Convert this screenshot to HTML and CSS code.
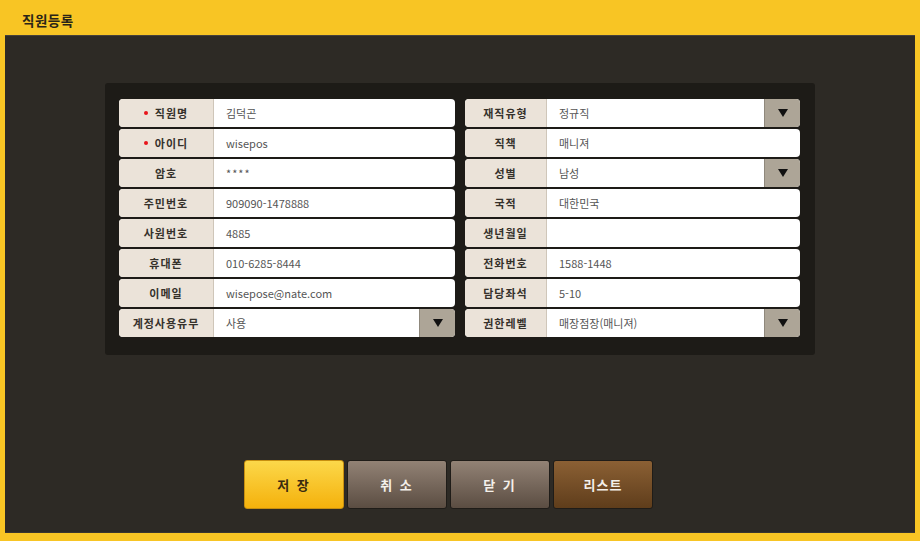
FILE: index.html
```html
<!DOCTYPE html>
<html lang="ko">
<head>
<meta charset="utf-8">
<title>직원등록</title>
<link rel="stylesheet" href="styles.css">
</head>
<body>
<div class="app">
  <header class="titlebar"><h1 class="title">직원등록</h1></header>
  <main class="main">
    <section class="panel">
      <div class="col col-left">
        <div class="row"><div class="label"><span class="req"></span>직원명</div><div class="value">김덕곤</div></div>
        <div class="row"><div class="label"><span class="req"></span>아이디</div><div class="value">wisepos</div></div>
        <div class="row"><div class="label">암호</div><div class="value pw">****</div></div>
        <div class="row"><div class="label">주민번호</div><div class="value">909090-1478888</div></div>
        <div class="row"><div class="label">사원번호</div><div class="value">4885</div></div>
        <div class="row"><div class="label">휴대폰</div><div class="value">010-6285-8444</div></div>
        <div class="row"><div class="label">이메일</div><div class="value">wisepose@nate.com</div></div>
        <div class="row"><div class="label">계정사용유무</div><div class="value">사용</div><div class="drop"><span class="tri"></span></div></div>
      </div>
      <div class="col col-right">
        <div class="row"><div class="label">재직유형</div><div class="value">정규직</div><div class="drop"><span class="tri"></span></div></div>
        <div class="row"><div class="label">직책</div><div class="value">매니져</div></div>
        <div class="row"><div class="label">성별</div><div class="value">남성</div><div class="drop"><span class="tri"></span></div></div>
        <div class="row"><div class="label">국적</div><div class="value">대한민국</div></div>
        <div class="row"><div class="label">생년월일</div><div class="value"></div></div>
        <div class="row"><div class="label">전화번호</div><div class="value">1588-1448</div></div>
        <div class="row"><div class="label">담당좌석</div><div class="value">5-10</div></div>
        <div class="row"><div class="label">권한레벨</div><div class="value">매장점장(매니져)</div><div class="drop"><span class="tri"></span></div></div>
      </div>
    </section>
    <div class="actions">
      <button class="btn btn-save">저 장</button>
      <button class="btn btn-gray">취 소</button>
      <button class="btn btn-gray">닫 기</button>
      <button class="btn btn-brown">리스트</button>
    </div>
  </main>
</div>
</body>
</html>
```
FILE: styles.css
```css
* { box-sizing: border-box; }
html, body { margin: 0; padding: 0; }
body {
  background: #f8c524;
  font-family: "Noto Sans CJK KR", "Noto Sans", sans-serif;
  width: 920px;
  height: 541px;
  overflow: hidden;
}
.app {
  height: 541px;
  padding: 0 5px 8px;
  display: flex;
  flex-direction: column;
}
.titlebar {
  height: 35px;
  display: flex;
  align-items: center;
  padding-left: 17px;
}
.title {
  margin: 0;
  font-size: 13.5px;
  font-weight: 700;
  color: #2a2418;
  letter-spacing: 0.5px;
  position: relative;
  top: 2px;
}
.main {
  flex: 1;
  background: #2d2a25;
  border-top: 1px solid #46413a;
  border-bottom: 1px solid #3a362f;
  display: flex;
  flex-direction: column;
  align-items: flex-start;
}
.panel {
  margin-top: 47px;
  margin-left: 100px;
  width: 710px;
  height: 272px;
  background: #1d1b17;
  border-radius: 3px;
  padding: 16px 15px 0 14px;
  display: flex;
  gap: 10px;
}
.col {
  display: flex;
  flex-direction: column;
  gap: 2px;
}
.col-left { width: 336px; }
.col-right { width: 335px; }
.row {
  height: 28px;
  display: flex;
  border-radius: 4px;
  overflow: hidden;
  background: #fff;
}
.label {
  background: #ebe3d9;
  border-right: 1px solid #cfc6b9;
  display: flex;
  align-items: center;
  justify-content: center;
  font-size: 11px;
  font-weight: 700;
  color: #35312b;
  letter-spacing: 1px;
}
.col-left .label { width: 95px; }
.col-right .label { width: 82px; }
.req {
  width: 4px;
  height: 4px;
  border-radius: 50%;
  background: #e8141b;
  margin-right: 7px;
}
.value {
  flex: 1;
  display: flex;
  align-items: center;
  padding-left: 12px;
  font-size: 11px;
  color: #555;
}
.pw { letter-spacing: 1px; }
.drop {
  width: 36px;
  background: #ada597;
  border-left: 1px solid #8f887c;
  display: flex;
  align-items: center;
  justify-content: center;
}
.tri {
  width: 0;
  height: 0;
  border-left: 5px solid transparent;
  border-right: 5px solid transparent;
  border-top: 8px solid #111;
}
.actions {
  margin-top: 105px;
  margin-left: 239px;
  display: flex;
  gap: 3px;
}
.btn {
  width: 100px;
  height: 49px;
  border-radius: 3px;
  border: 1px solid #1f1c18;
  font-family: "Noto Sans CJK KR", "Noto Sans", sans-serif;
  font-size: 13px;
  font-weight: 700;
  letter-spacing: 2px;
  color: #f4f0ea;
  cursor: pointer;
}
.btn-save {
  background: linear-gradient(#fcd84a, #f4b10c);
  color: #3a2a10;
  border-color: #c78f10;
}
.btn-gray {
  background: linear-gradient(#928275, #5b4d42);
}
.btn-brown {
  background: linear-gradient(#8b6034, #5f3d1b);
  letter-spacing: 1px;
}
```
